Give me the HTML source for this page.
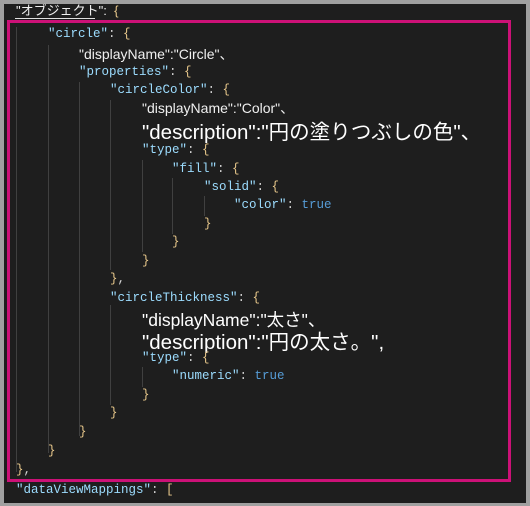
<!DOCTYPE html>
<html><head><meta charset="utf-8"><style>
html,body{margin:0;padding:0;}
body{width:530px;height:506px;background:#a0a0a0;position:relative;overflow:hidden;}
#ed{position:absolute;left:4px;top:4px;width:522px;height:499px;background:#1e1e1e;}
.l{position:absolute;height:18px;line-height:18px;white-space:pre;font-family:"Liberation Mono",monospace;font-size:12.5px;color:#d4d4d4;}
.k{color:#9cdcfe;}
.b{color:#e6c68a;}
.t{color:#569cd6;}
.s{font-family:"Liberation Sans","Noto Sans CJK JP",sans-serif;color:#f0f0f0;}
.g{position:absolute;width:1px;background:#404040;}
#pink{position:absolute;left:7px;top:20px;width:498px;height:456px;border:3px solid #cc1177;}
</style></head><body>
<div id="ed"></div>
<div class="g" style="left:16px;top:27px;height:445px"></div>
<div class="g" style="left:48px;top:45px;height:408px"></div>
<div class="g" style="left:79px;top:82px;height:354px"></div>
<div class="g" style="left:110px;top:100px;height:170px"></div>
<div class="g" style="left:110px;top:305px;height:100px"></div>
<div class="g" style="left:142px;top:160px;height:92px"></div>
<div class="g" style="left:142px;top:367px;height:20px"></div>
<div class="g" style="left:172px;top:178px;height:56px"></div>
<div class="g" style="left:204px;top:196px;height:20px"></div>
<div style="position:absolute;left:15px;top:18px;width:80px;height:1px;background:#e0e0e0"></div>
<div id="pink"></div>

<div class="l s" style="left:16px;top:2px;font-size:13px">"オブジェクト":  <span class="b">{</span></div>
<div class="l" style="left:48px;top:25px"><span class="k">"circle"</span>: <span class="b">{</span></div>
<div class="l s" style="left:79px;top:45px;font-size:14px">"displayName":"Circle"、</div>
<div class="l" style="left:79px;top:63px"><span class="k">"properties"</span>: <span class="b">{</span></div>
<div class="l" style="left:110px;top:81px"><span class="k">"circleColor"</span>: <span class="b">{</span></div>
<div class="l s" style="left:142px;top:99px;font-size:14px">"displayName":"Color"、</div>
<div class="l s" style="left:142px;top:121px;height:24px;line-height:24px;font-size:20.5px;color:#fff">"description":"円の塗りつぶしの色"、</div>
<div class="l" style="left:142px;top:141px"><span class="k">"type"</span>: <span class="b">{</span></div>
<div class="l" style="left:172px;top:160px"><span class="k">"fill"</span>: <span class="b">{</span></div>
<div class="l" style="left:204px;top:178px"><span class="k">"solid"</span>: <span class="b">{</span></div>
<div class="l" style="left:234px;top:196px"><span class="k">"color"</span>: <span class="t">true</span></div>
<div class="l b" style="left:204px;top:215px">}</div>
<div class="l b" style="left:172px;top:233px">}</div>
<div class="l b" style="left:142px;top:252px">}</div>
<div class="l" style="left:110px;top:270px"><span class="b">}</span>,</div>
<div class="l" style="left:110px;top:289px"><span class="k">"circleThickness"</span>: <span class="b">{</span></div>
<div class="l s" style="left:142px;top:309px;height:22px;line-height:22px;font-size:17.5px;color:#fff">"displayName":"太さ"、</div>
<div class="l s" style="left:142px;top:331px;height:24px;line-height:24px;font-size:20.5px;color:#fff">"description":"円の太さ。",</div>
<div class="l" style="left:142px;top:349px"><span class="k">"type"</span>: <span class="b">{</span></div>
<div class="l" style="left:172px;top:367px"><span class="k">"numeric"</span>: <span class="t">true</span></div>
<div class="l b" style="left:142px;top:386px">}</div>
<div class="l b" style="left:110px;top:404px">}</div>
<div class="l b" style="left:79px;top:423px">}</div>
<div class="l b" style="left:48px;top:442px">}</div>
<div class="l" style="left:16px;top:461px"><span class="b">}</span>,</div>
<div class="l" style="left:16px;top:481px"><span class="k">"dataViewMappings"</span>: <span class="b">[</span></div>
</body></html>
